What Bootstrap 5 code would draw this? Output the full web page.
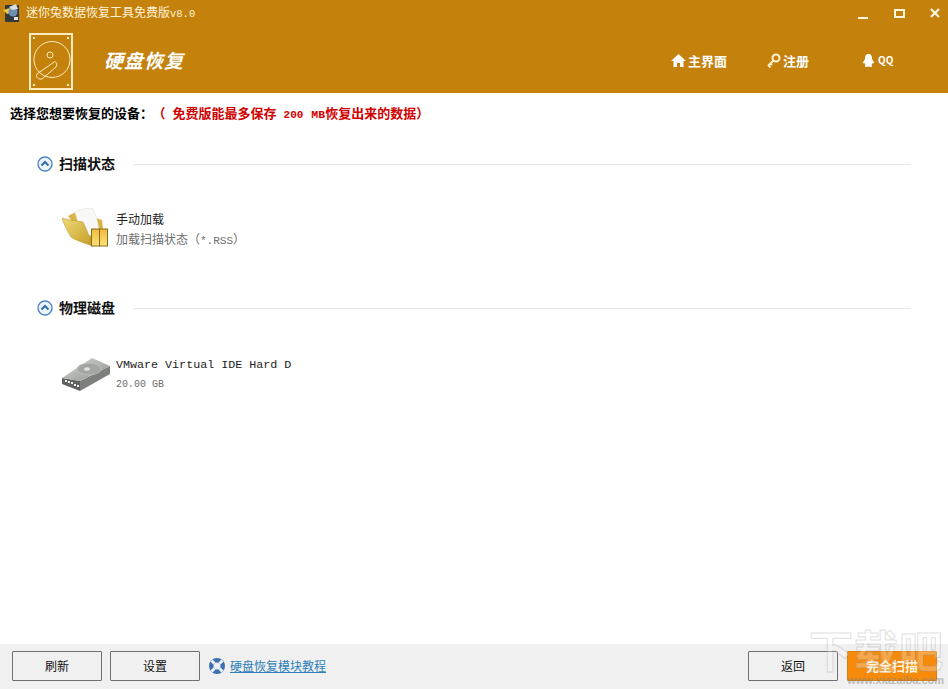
<!doctype html>
<html lang="zh">
<head>
<meta charset="utf-8">
<title>迷你兔数据恢复工具</title>
<link href="https://cdn.jsdelivr.net/npm/bootstrap@5.3.0/dist/css/bootstrap.min.css" rel="stylesheet">
<style>
html,body{height:100%;}
body{font-family:"Noto Sans CJK SC","Liberation Sans",sans-serif;font-size:12px;color:#111;background:#fff;overflow:hidden;}
.app-shell{height:689px;width:948px;position:relative;}
.app-head{height:93px;background:#c4810c;color:#fff;flex:none;}
.title-row{height:25px;padding-left:3px;}
.app-ico{width:18px;height:20px;margin-right:5px;}
.title-text{font-size:12px;color:#fff3d8;line-height:24px;}
.title-ver{font-family:"Liberation Mono",monospace;font-size:10.5px;}
.win-btns{padding-right:4px;gap:19px;margin-top:2px;}
.win-btns svg{display:block;width:17px;height:17px;}
.brand-row{height:68px;padding-left:29px;}
.brand-ico{width:45px;height:57px;display:block;margin-top:5px;}
.brand-name{font-size:19px;font-style:italic;font-weight:700;margin-left:30px;margin-top:2px;color:#fff;letter-spacing:1px;}
.top-links{margin-top:1px;}
.top-link{display:flex;align-items:center;color:#fff;font-size:13px;font-weight:700;line-height:1;}
.top-link svg{width:15px;height:15px;margin-right:2px;}
.top-a,.top-b{width:95px;}
.top-c{width:87px;}
.top-qq{font-size:10px;}
.app-main{flex:1 1 auto;min-height:0;}
.notice-row{height:41px;padding-left:10px;padding-top:12px;font-weight:700;font-size:13px;line-height:16px;color:#000;white-space:nowrap;}
.notice-red{color:#d00000;margin-left:6px;}
.notice-body{margin-left:7px;}
.num-a{font-family:"Liberation Mono",monospace;font-size:11px;margin:0 8px 0 7px;}
.num-b{font-family:"Liberation Mono",monospace;font-size:11.500px;}
.gap-top{height:19px;}
.group-head{height:22px;padding-left:37px;padding-right:37px;}
.group-ico{width:16px;height:16px;margin-right:6px;display:block;}
.group-name{font-size:14px;font-weight:700;color:#111;margin-top:-1px;}
.group-rule{flex:1 1 auto;height:1px;background:#e4e7e6;margin-left:19px;}
.dev-row{padding-left:62px;height:52px;}
.dev-ico{width:48px;height:44px;display:block;margin-right:6px;}
.dev-one{font-size:12px;line-height:20px;color:#222;}
.dev-two{font-size:12px;line-height:20px;color:#6e6e6e;}
.mono-ext{font-family:"Liberation Mono",monospace;font-size:11px;}
.mono-sm{font-family:"Liberation Mono",monospace;font-size:10px;}
.mono-main{font-family:"Liberation Mono",monospace;font-size:11.700px;}
.gap-one{height:29px;}
.gap-two{height:30px;}
.gap-three{height:41px;}
.app-foot{height:45px;background:#f0f0f0;flex:none;padding:7px 11px 8px 12px;}
.foot-btn{width:90px;height:30px;padding:0;background:#f0f0f0;border:1px solid #707070;border-radius:1px;color:#111;font-size:12px;line-height:28px;}
.foot-btn:hover{background:#f0f0f0;border-color:#707070;color:#111;}
.foot-go{background:#f58a0b;border-color:#e07d08;color:#fff4dc;margin-left:9px;font-weight:700;font-size:13px;}
.foot-go:hover{background:#f58a0b;border-color:#e07d08;color:#fff4dc;}
.help-ico{width:18px;height:18px;margin-left:8px;margin-right:4px;display:block;}
.help-link{color:#2d7fb8;font-size:12px;}
.mark-wm{position:absolute;right:4px;bottom:3px;width:146px;pointer-events:none;text-align:right;}
.mark-big{font-size:44px;line-height:52px;font-weight:700;text-align:right;color:rgba(255,255,255,.25);-webkit-text-stroke:1px rgba(160,160,160,.35);white-space:nowrap;letter-spacing:1px;}
.mark-small{font-family:"Liberation Sans",sans-serif;font-size:11px;line-height:11px;font-weight:700;color:rgba(130,130,130,.5);}
</style>
</head>
<body>
<div class="app-shell d-flex flex-column">
  <header class="app-head d-flex flex-column">
    <div class="title-row d-flex align-items-center justify-content-between">
      <div class="d-flex align-items-center">
        <svg class="app-ico" viewBox="0 0 18 20"><rect x="2" y="2" width="14" height="17" rx="1" fill="#33383d"/><path d="M0 7 L7 5 L10 9 L4 11Z" fill="#e7c84a"/><circle cx="10" cy="9" r="4.500" fill="#6f8fb0"/><path d="M6 4 L13 1 L15 6 L9 7Z" fill="#d9dfe3"/><rect x="11" y="14" width="4" height="3" fill="#e6e6d8"/></svg>
        <span class="title-text">迷你兔数据恢复工具免费版<span class="title-ver">v8.0</span></span>
      </div>
      <div class="win-btns d-flex">
        <svg viewBox="0 0 17 17"><rect x="3" y="12" width="10" height="2" fill="#fff6df"/></svg>
        <svg viewBox="0 0 17 17"><path d="M4 5h9v7H4z" fill="none" stroke="#fff6df" stroke-width="2"/></svg>
        <svg viewBox="0 0 17 17"><path d="M4 4l8 8M12 4l-8 8" fill="none" stroke="#fff6df" stroke-width="2.200"/></svg>
      </div>
    </div>
    <div class="brand-row d-flex align-items-start justify-content-between">
      <div class="d-flex align-items-center h-100">
        <svg class="brand-ico" viewBox="0 0 45 57" fill="none" stroke="#fdecc0"><rect x="1" y="1" width="42" height="55" stroke-width="2"/><circle cx="23" cy="26.500" r="18" stroke-width="1"/><circle cx="21" cy="22" r="3" stroke-width="1"/><path d="M25 29 L8 41 C6 44 10 47 13 46 L27 34 C29 31 27 28 25 29Z" stroke-width="1"/><g fill="#fdecc0" stroke="none"><rect x="4" y="4" width="2" height="2"/><rect x="38" y="4" width="2" height="2"/><rect x="4" y="51" width="2" height="2"/><rect x="38" y="51" width="2" height="2"/></g></svg>
        <div class="brand-name">硬盘恢复</div>
      </div>
      <nav class="top-links d-flex h-100 align-items-center">
        <a class="top-link top-a text-decoration-none" href="#"><svg viewBox="0 0 15 15"><path d="M7.500 1 L15 8 H12.500 V14 H9 V10 H6 V14 H2.500 V8 H0Z" fill="#fff"/></svg>主界面</a>
        <a class="top-link top-b text-decoration-none" href="#"><svg viewBox="0 0 15 15"><circle cx="10" cy="5" r="3.500" fill="none" stroke="#fff2d2" stroke-width="2"/><path d="M7.500 7.500 L2 13 M2.500 12.500 L4.500 14.500 M4.500 10.500 L6 12" stroke="#fff2d2" stroke-width="2" fill="none"/></svg>注册</a>
        <a class="top-link top-c text-decoration-none" href="#"><svg viewBox="0 0 15 15"><path d="M7.500 1 C4.500 1 4 3.500 4 6 C3 7.500 2 9 2 10.500 L3.500 10 C4 11 4 11.500 4.500 12 C3.500 12.500 3.500 14 5.500 14 C6.500 14 7 13.500 7.500 13.500 C8 13.500 8.500 14 9.500 14 C11.500 14 11.500 12.500 10.500 12 C11 11.500 11 11 11.500 10 L13 10.500 C13 9 12 7.500 11 6 C11 3.500 10.500 1 7.500 1Z" fill="#fff"/></svg><span class="top-qq">QQ</span></a>
      </nav>
    </div>
  </header>
  <main class="app-main">
    <div class="notice-row">选择您想要恢复的设备：<span class="notice-red">（<span class="notice-body">免费版能最多保存<span class="num-a">200</span><span class="num-b">MB</span>恢复出来的数据）</span></span></div>
    <div class="gap-top"></div>
    <section>
      <div class="group-head d-flex align-items-center">
        <svg class="group-ico" viewBox="0 0 16 16"><circle cx="8" cy="8" r="7" fill="#eef4fa" stroke="#4f86bd" stroke-width="1.400"/><path d="M4.500 9.500 L8 6 L11.500 9.500" fill="none" stroke="#2f6db0" stroke-width="2"/></svg>
        <span class="group-name">扫描状态</span><span class="group-rule"></span>
      </div>
      <div class="gap-one"></div>
      <div class="dev-row d-flex align-items-center">
        <svg class="dev-ico" viewBox="0 0 48 44">
          <defs>
            <linearGradient id="fdFront" x1="0" y1="0" x2="1" y2="1"><stop offset="0" stop-color="#efd97a"/><stop offset="1" stop-color="#c49c22"/></linearGradient>
            <linearGradient id="fdTab" x1="0" y1="0" x2="0" y2="1"><stop offset="0" stop-color="#f0b93c"/><stop offset="1" stop-color="#fbe27a"/></linearGradient>
          </defs>
          <path d="M6 8 L14 4 L40 12 L42 30 L30 38Z" fill="#d8b445"/>
          <path d="M13 4 C18 1 24 0 30 0 C34 6 36 14 37 24 L20 30Z" fill="#f8f9f7" stroke="#e3e3d8" stroke-width=".6"/>
          <path d="M0 10 C6 12 16 13 21 14 C24 20 28 30 31 38 C22 35 13 32 9 29 C5 23 2 16 0 10Z" fill="url(#fdFront)" stroke="#b08d24" stroke-width=".5"/>
          <rect x="29.500" y="21" width="8" height="17" fill="url(#fdTab)" stroke="#8a6a1a"/>
          <rect x="37.500" y="21" width="8" height="17" fill="url(#fdTab)" stroke="#8a6a1a"/>
        </svg>
        <div><div class="dev-one">手动加载</div><div class="dev-two">加载扫描状态（<span class="mono-ext">*.RSS</span>）</div></div>
      </div>
    </section>
    <div class="gap-three"></div>
    <section>
      <div class="group-head d-flex align-items-center">
        <svg class="group-ico" viewBox="0 0 16 16"><circle cx="8" cy="8" r="7" fill="#eef4fa" stroke="#4f86bd" stroke-width="1.400"/><path d="M4.500 9.500 L8 6 L11.500 9.500" fill="none" stroke="#2f6db0" stroke-width="2"/></svg>
        <span class="group-name">物理磁盘</span><span class="group-rule"></span>
      </div>
      <div class="gap-two"></div>
      <div class="dev-row d-flex align-items-center">
        <svg class="dev-ico" viewBox="0 0 48 44">
          <defs><linearGradient id="hdTop" x1="0" y1="0" x2="1" y2="1"><stop offset="0" stop-color="#d6d9d6"/><stop offset="1" stop-color="#8e928f"/></linearGradient></defs>
          <path d="M0 25 L18 28 L18 38 L0 31Z" fill="#5f625f"/>
          <path d="M18 28 L48 13 L48 21 L18 38Z" fill="#7c7f7c"/>
          <path d="M0 25 L30 5 L48 13 L18 28Z" fill="url(#hdTop)"/>
          <ellipse cx="27" cy="16" rx="12" ry="6" fill="#a3a7a4" stroke="#c9ccc9" stroke-width=".6"/>
          <ellipse cx="25" cy="16" rx="3" ry="1.800" fill="#dfe1df"/>
          <g fill="#ececec"><rect x="3" y="27" width="2" height="2"/><rect x="6" y="28" width="2" height="2"/><rect x="9" y="29" width="2" height="2"/><rect x="12" y="31" width="2" height="2"/><rect x="15" y="32" width="2" height="2"/></g>
        </svg>
        <div><div class="dev-one mono-main">VMware Virtual IDE Hard D</div><div class="dev-two mono-sm">20.00 GB</div></div>
      </div>
    </section>
  </main>
  <footer class="app-foot d-flex align-items-center">
    <button type="button" class="btn foot-btn me-2">刷新</button>
    <button type="button" class="btn foot-btn">设置</button>
    <svg class="help-ico" viewBox="0 0 18 18"><circle cx="9" cy="9" r="8" fill="#3e6fb3"/><circle cx="9" cy="9" r="3.500" fill="#f0f0f0"/><path d="M3.500 3.500 L6.500 6.500 M14.500 3.500 L11.500 6.500 M3.500 14.500 L6.500 11.500 M14.500 14.500 L11.500 11.500" stroke="#eef1f5" stroke-width="3"/></svg>
    <a class="help-link" href="#">硬盘恢复模块教程</a>
    <div class="ms-auto d-flex">
      <button type="button" class="btn foot-btn">返回</button>
      <button type="button" class="btn foot-btn foot-go">完全扫描</button>
    </div>
  </footer>
  <div class="mark-wm"><div class="mark-big">下载吧</div><div class="mark-small">www.xiazaiba.com</div></div>
</div>
<script src="https://cdn.jsdelivr.net/npm/bootstrap@5.3.0/dist/js/bootstrap.bundle.min.js"></script>
</body>
</html>
